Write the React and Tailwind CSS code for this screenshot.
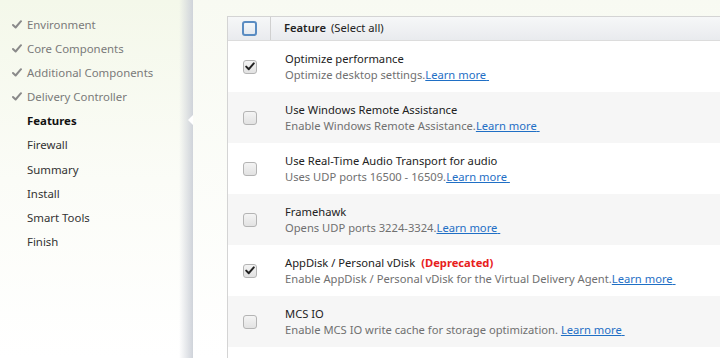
import React from "react";

const steps = [
  { label: "Environment", done: true },
  { label: "Core Components", done: true },
  { label: "Additional Components", done: true },
  { label: "Delivery Controller", done: true },
  { label: "Features", current: true },
  { label: "Firewall" },
  { label: "Summary" },
  { label: "Install" },
  { label: "Smart Tools" },
  { label: "Finish" },
];

const rows = [
  { title: "Optimize performance", desc: "Optimize desktop settings.", link: "Learn more", checked: true },
  { title: "Use Windows Remote Assistance", desc: "Enable Windows Remote Assistance.", link: "Learn more" },
  { title: "Use Real-Time Audio Transport for audio", desc: "Uses UDP ports 16500 - 16509.", link: "Learn more" },
  { title: "Framehawk", desc: "Opens UDP ports 3224-3324.", link: "Learn more" },
  { title: "AppDisk / Personal vDisk", dep: true, desc: "Enable AppDisk / Personal vDisk for the Virtual Delivery Agent.", link: "Learn more", checked: true },
  { title: "MCS IO", desc: "Enable MCS IO write cache for storage optimization. ", link: "Learn more" },
];

function Check() {
  return (
    <svg width="10" height="9" viewBox="0 0 10 9" className="mr-[5px]">
      <path d="M1 5 L3.6 7.5 L9 1.2" fill="none" stroke="#8a8a8a" strokeWidth="2" strokeLinecap="round" strokeLinejoin="round" />
    </svg>
  );
}

function Box({ checked }) {
  return (
    <div className="w-[14px] h-[14px] rounded-[3px] border border-[#b4b4b4] bg-gradient-to-b from-[#f4f4f4] to-[#e2e2e2] flex items-center justify-center">
      {checked && (
        <svg width="10" height="9" viewBox="0 0 10 9">
          <path d="M1.2 4.6 L3.8 7.2 L8.8 1.4" fill="none" stroke="#222" strokeWidth="2" strokeLinecap="round" strokeLinejoin="round" />
        </svg>
      )}
    </div>
  );
}

export default function App() {
  return (
    <div
      className="w-[720px] h-[358px] overflow-hidden flex bg-gradient-to-b from-[#f4f8ea] via-[#fbfcf7] to-white text-[11.2px]"
      style={{ fontFamily: '"Noto Sans", "Open Sans", Arial, sans-serif' }}
    >
      {/* Sidebar */}
      <div className="relative w-[193px] shrink-0 h-full">
        <div className="absolute right-0 top-0 bottom-0 w-[14px] bg-gradient-to-r from-transparent to-[#cfd3da]" />
        <div className="flex flex-col pt-[12px] pl-[12px] text-[11.4px]">
          {steps.map((s) => (
            <div key={s.label} className="h-[24.2px] flex items-center">
              {s.done ? <Check /> : <span className="w-[15px]" />}
              <span
                className={
                  s.current
                    ? "font-bold text-[#111]"
                    : s.done
                    ? "text-[#7a7a7a]"
                    : "text-[#333]"
                }
              >
                {s.label}
              </span>
            </div>
          ))}
        </div>
      </div>
      {/* Main */}
      <div className="relative flex-1 pl-[34px] pt-[16px] bg-gradient-to-b from-[#f8faf2] to-white">
        <div className="absolute left-[-5px] top-[115px] w-0 h-0 border-y-[5px] border-y-transparent border-r-[5px] border-r-white" />
        <div className="h-full border-l border-t border-[#d4d4d4] bg-white">
          <div className="h-[24px] flex items-center bg-gradient-to-b from-[#f6f7f8] to-[#e9ebee] border-b border-[#dcdcdc]">
            <div className="w-[43px] h-full flex items-center justify-center border-r border-[#d0d0d0]">
              <div className="w-[15px] h-[15px] rounded-[3px] border-2 border-[#5a8cc2] bg-gradient-to-b from-[#f4f7fa] to-[#e4e9ef]" />
            </div>
            <div className="pl-[13px] text-[#222]">
              <span className="font-semibold">Feature</span>
              <span className="ml-[5px]">(Select all)</span>
            </div>
          </div>
          {rows.map((r, i) => (
            <div
              key={r.title}
              className={"h-[51px] flex items-center " + (i % 2 === 1 ? "bg-[#f6f6f6]" : "bg-white")}
            >
              <div className="w-[43px] flex justify-center">
                <Box checked={r.checked} />
              </div>
              <div className="pl-[14px] flex flex-col leading-[16px]">
                <div className="text-[#222]">
                  {r.title}
                  {r.dep && <span className="ml-[6px] font-bold text-[#e8201c]">(Deprecated)</span>}
                </div>
                <div className="text-[#707070]">
                  {r.desc}
                  <span className="text-[#1f6fc5] underline">{r.link}&nbsp;</span>
                </div>
              </div>
            </div>
          ))}
        </div>
      </div>
    </div>
  );
}
